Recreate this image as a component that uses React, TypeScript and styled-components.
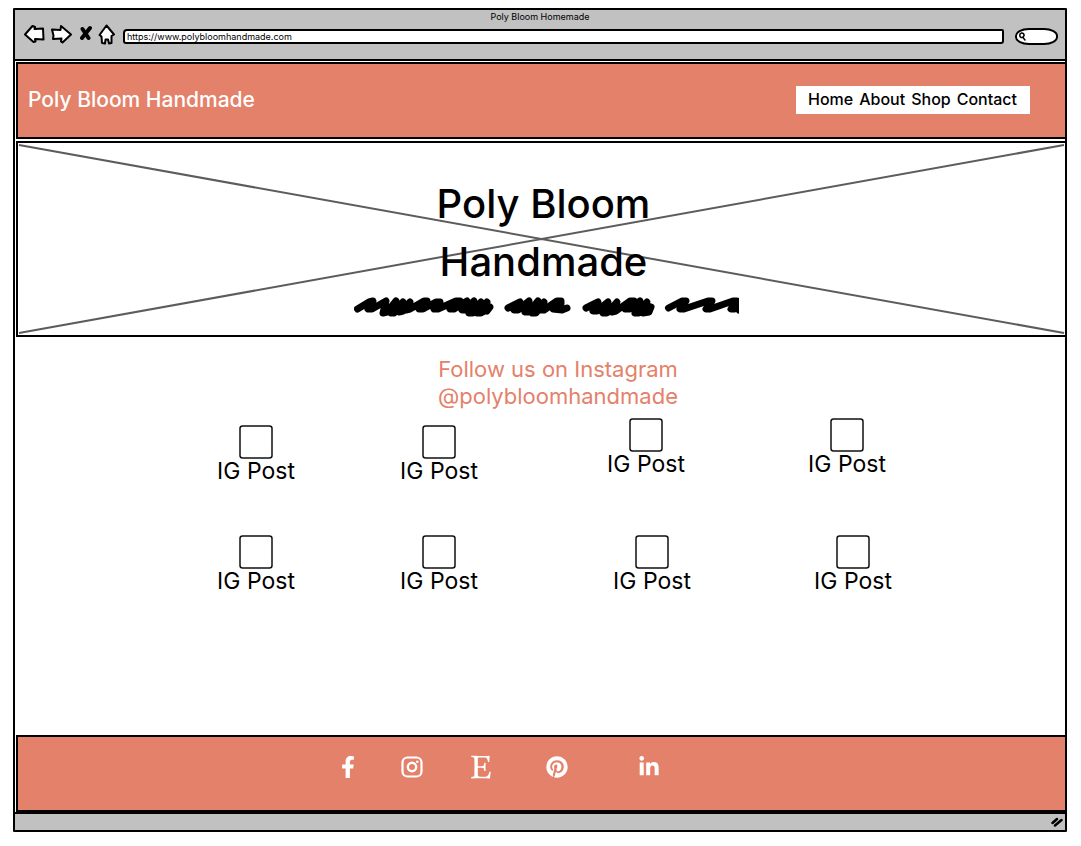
import React from "react";
import styled, { createGlobalStyle } from "styled-components";
import { FaFacebookF, FaEtsy, FaPinterest, FaLinkedinIn } from "react-icons/fa";

const coral = "#e4816a";
const grey = "#c1c1c1";

const GlobalStyle = createGlobalStyle`
  * { box-sizing: border-box; }
  body {
    margin: 0;
    background: #fff;
    color: #000;
    font-family: Inter, "Open Sans", sans-serif;
  }
  h1, h2, p, ul { margin: 0; padding: 0; font-weight: 400; }
  a { color: inherit; text-decoration: none; }
`;

const BrowserWindow = styled.div`
  margin: 8px 14px 14px 13px;
  border: 2px solid #000;
  border-radius: 1px;
`;

const Chrome = styled.div`
  height: 51px;
  background: ${grey};
  border-bottom: 2px solid #000;
`;

const WindowTitle = styled.p`
  height: 12px;
  font-size: 9px;
  line-height: 14px;
  text-align: center;
`;

const Toolbar = styled.div`
  display: flex;
  align-items: center;
  height: 26px;
  padding: 0 7px 0 9px;
`;

const ToolButton = styled.button`
  display: flex;
  padding: 0;
  margin: 0 6px 2px 0;
  border: 0;
  background: none;
`;

const AddressBar = styled.input`
  flex: 1;
  min-width: 0;
  height: 15px;
  margin: 3px 11px 0 1px;
  padding: 0 2px;
  border: 2px solid #000;
  border-radius: 4px 2px 3px 3px;
  background: #fff;
  color: #000;
  font: 9px/11px Inter, "Open Sans", sans-serif;
`;

const SearchBox = styled.label`
  display: flex;
  align-items: center;
  width: 43px;
  height: 17px;
  margin-top: 3px;
  padding-left: 1px;
  border: 2px solid #000;
  border-radius: 14px / 8px;
  background: #fff;
`;

const SearchInput = styled.input`
  flex: 1;
  min-width: 0;
  height: 10px;
  padding: 0;
  border: 0;
  background: none;
  font-size: 9px;
`;

const Header = styled.header`
  display: flex;
  align-items: center;
  justify-content: space-between;
  height: 77px;
  margin: 1px 0 0 1px;
  padding: 0 35px 2px 10px;
  border: 2px solid #000;
  border-right: 0;
  background: ${coral};
`;

const Brand = styled.a`
  color: #fff;
  font-size: 21px;
  font-weight: 500;
  line-height: 30px;
`;

const Nav = styled.nav`
  display: flex;
  gap: 6px;
  height: 28px;
  padding: 0 13px 0 12px;
  background: #fff;
  font-size: 16px;
  font-weight: 500;
  line-height: 27px;
`;

const Hero = styled.section`
  position: relative;
  display: flex;
  flex-direction: column;
  align-items: center;
  height: 196px;
  margin: 2px 0 0 1px;
  padding: 32px 0 0 4px;
  border: 2px solid #000;
  border-right: 0;
`;

const HeroCross = styled.svg`
  position: absolute;
  inset: 0;
  width: 100%;
  height: 100%;
`;

const HeroTitle = styled.h1`
  position: relative;
  max-width: 260px;
  font-size: 40px;
  font-weight: 500;
  line-height: 58px;
  text-align: center;
`;

const Scribble = styled.svg`
  position: relative;
  margin: 5px 0 0 6px;
`;

const Feed = styled.main`
  min-height: 398px;
  padding-top: 19px;
`;

const FollowText = styled.h2`
  padding-left: 36px;
  color: ${coral};
  font-size: 22px;
  line-height: 27px;
  text-align: center;
`;

const Posts = styled.div`
  padding-top: 8px;
`;

const PostRow = styled.ul<{ $columns: string }>`
  display: grid;
  grid-template-columns: ${(p) => p.$columns};
  height: 110px;
  padding: 0 133px 0 149px;
  list-style: none;
`;

const Post = styled.li<{ $raised?: boolean }>`
  display: flex;
  flex-direction: column;
  align-items: center;
  padding-top: ${(p) => (p.$raised ? 0 : 7)}px;
  font-size: 23px;
  line-height: 25px;
`;

const Thumb = styled.svg`
  width: 34px;
  height: 34px;
`;

const Footer = styled.footer`
  height: 77px;
  margin-left: 1px;
  padding: 17px 0 0 319px;
  border: 2px solid #000;
  border-right: 0;
  background: ${coral};
  color: #fff;
`;

const Social = styled.ul`
  display: grid;
  grid-template-columns: 64px 67px 78px 92px 24px;
  align-items: center;
  height: 26px;
  list-style: none;
`;

const SocialLink = styled.a<{ $size: number }>`
  display: flex;
  font-size: ${(p) => p.$size}px;
`;

const StatusBar = styled.div`
  display: flex;
  justify-content: flex-end;
  align-items: center;
  height: 18px;
  padding-right: 2px;
  border-top: 2px solid #000;
  background: ${grey};
`;

const InstagramIcon = () => (
  <svg width="1em" height="1em" viewBox="0 0 22 22" fill="none" stroke="currentColor" aria-hidden="true">
    <rect x="1.500" y="1.500" width="19" height="19" rx="5" strokeWidth="2.200" />
    <circle cx="11" cy="11" r="4.200" strokeWidth="2.400" />
    <circle cx="16.300" cy="5.700" r="1.300" fill="currentColor" stroke="none" />
  </svg>
);

const rows = [
  { columns: "184fr 182fr 232fr 170fr", raised: [false, false, true, true] },
  { columns: "184fr 182fr 244fr 158fr", raised: [false, false, false, false] },
];

const socials = [
  { name: "Facebook", Icon: FaFacebookF, size: 22 },
  { name: "Instagram", Icon: InstagramIcon, size: 22 },
  { name: "Etsy", Icon: FaEtsy, size: 26 },
  { name: "Pinterest", Icon: FaPinterest, size: 22 },
  { name: "LinkedIn", Icon: FaLinkedinIn, size: 22 },
];

const outline = { fill: "#fff", stroke: "#000", strokeWidth: 2, strokeLinejoin: "round" as const };

export default function App() {
  return (
    <>
      <GlobalStyle />
      <BrowserWindow>
        <Chrome>
          <WindowTitle>Poly Bloom Homemade</WindowTitle>
          <Toolbar>
            <ToolButton aria-label="Back">
              <svg width="21" height="20" viewBox="0 0 21 20">
                <path d="M1 10.500 8.500 2l2.500 1-.5 2 8.500-.5.5 11-8.500-.5.5 2.500-2 .5Z" {...outline} />
              </svg>
            </ToolButton>
            <ToolButton aria-label="Forward">
              <svg width="21" height="20" viewBox="0 0 21 20">
                <path d="M1 5.500 9.500 6l.5-4 10 8.500-8.500 8-1.500-1 .5-3-8.500.5.5-3.500Z" {...outline} />
              </svg>
            </ToolButton>
            <ToolButton aria-label="Stop">
              <svg width="14" height="20" viewBox="0 0 14 20">
                <path d="M4.500 5 10.500 14M12 4 4 14" fill="none" stroke="#000" strokeWidth="4" strokeLinecap="round" />
              </svg>
            </ToolButton>
            <ToolButton aria-label="Home">
              <svg width="18" height="21" viewBox="0 0 18 21">
                <path d="M8.500 1.500 1.500 11l2 1.500.5 6.500 3 .5.5-4h2.500l1 4 2.500-.5v-7l2.500-1.500Z" {...outline} />
              </svg>
            </ToolButton>
            <AddressBar aria-label="Address" defaultValue="https://www.polybloomhandmade.com" />
            <SearchBox>
              <svg width="8" height="9" viewBox="0 0 8 9" aria-hidden="true">
                <path d="M3.500 1C5 .8 6.300 2 6 3.500S4 6 2.800 5.300 1 1.500 3.500 1ZM5 5.500 7 8" fill="none" stroke="#000" strokeWidth="1.500" strokeLinecap="round" />
              </svg>
              <SearchInput aria-label="Search" />
            </SearchBox>
          </Toolbar>
        </Chrome>

        <Header>
          <Brand href="#">Poly Bloom Handmade</Brand>
          <Nav>
            <a href="#home">Home</a>
            <a href="#about">About</a>
            <a href="#shop">Shop</a>
            <a href="#contact">Contact</a>
          </Nav>
        </Header>

        <Hero>
          <HeroCross viewBox="0 0 1048 192" preserveAspectRatio="none" aria-hidden="true">
            <path d="M1 2 1047 190M1 190 1047 2" fill="none" stroke="#5c5c5c" strokeWidth="2" />
          </HeroCross>
          <HeroTitle>Poly Bloom Handmade</HeroTitle>
          <Scribble width="385" height="23" viewBox="0 0 385 23" aria-hidden="true">
            <g fill="none" stroke="#000" strokeWidth="7" strokeLinecap="round" strokeLinejoin="round">
              <path d="M3.500 13 15 6 19 5 14 13 18 13 32 5 29 17 33 16 42 5 37 17 40 17 49 6 45 16 49 15 56 6 52 14 56 13 70 5 73 5 65 13 69 13 82 6 86 6 80 13 84 13 102 5 106 5 96 13 100 13 113 5 108 14 111 14 120 5 115 17 119 17 127 6 123 17 127 17 133 6 129 16 136 11 133 15" />
              <path d="M154 12 166 6 160 14 164 14 175 5 171 16 175 16 184 5 178 17 182 17 190 6 186 14 190 14 203 5 207 5 207 8 199 13 208 14 213 12" />
              <path d="M232 12 244 6 239 15 243 15 254 6 249 17 253 17 263 6 258 16 262 15 276 5 280 5 271 13 276 13 286 5 281 17 285 17 293 6 289 17 295 16 297 11 294 10" />
              <path d="M314.500 12 328 5 332 5 326 13 330 13 354 5 358 5 352 13 356 13 379 5 383 5 377 13 380 13 392 7 385 14" />
            </g>
          </Scribble>
        </Hero>

        <Feed>
          <FollowText>
            Follow us on Instagram
            <br />
            @polybloomhandmade
          </FollowText>
          <Posts>
            {rows.map((row) => (
              <PostRow key={row.columns} $columns={row.columns}>
                {row.raised.map((raised, i) => (
                  <Post key={i} $raised={raised}>
                    <Thumb viewBox="0 0 34 34" aria-hidden="true">
                      <rect x="1" y="1" width="32" height="32" rx="2.500" fill="none" stroke="#111" strokeWidth="1.500" />
                    </Thumb>
                    IG Post
                  </Post>
                ))}
              </PostRow>
            ))}
          </Posts>
        </Feed>

        <Footer>
          <Social>
            {socials.map(({ name, Icon, size }) => (
              <li key={name}>
                <SocialLink href={`#${name.toLowerCase()}`} aria-label={name} $size={size}>
                  <Icon />
                </SocialLink>
              </li>
            ))}
          </Social>
        </Footer>
        <StatusBar>
          <svg width="12" height="12" viewBox="0 0 12 12" aria-hidden="true">
            <path d="M1.500 7 6 3M4 9.500 10.500 4" stroke="#000" strokeWidth="2.500" strokeLinecap="round" />
          </svg>
        </StatusBar>
      </BrowserWindow>
    </>
  );
}
